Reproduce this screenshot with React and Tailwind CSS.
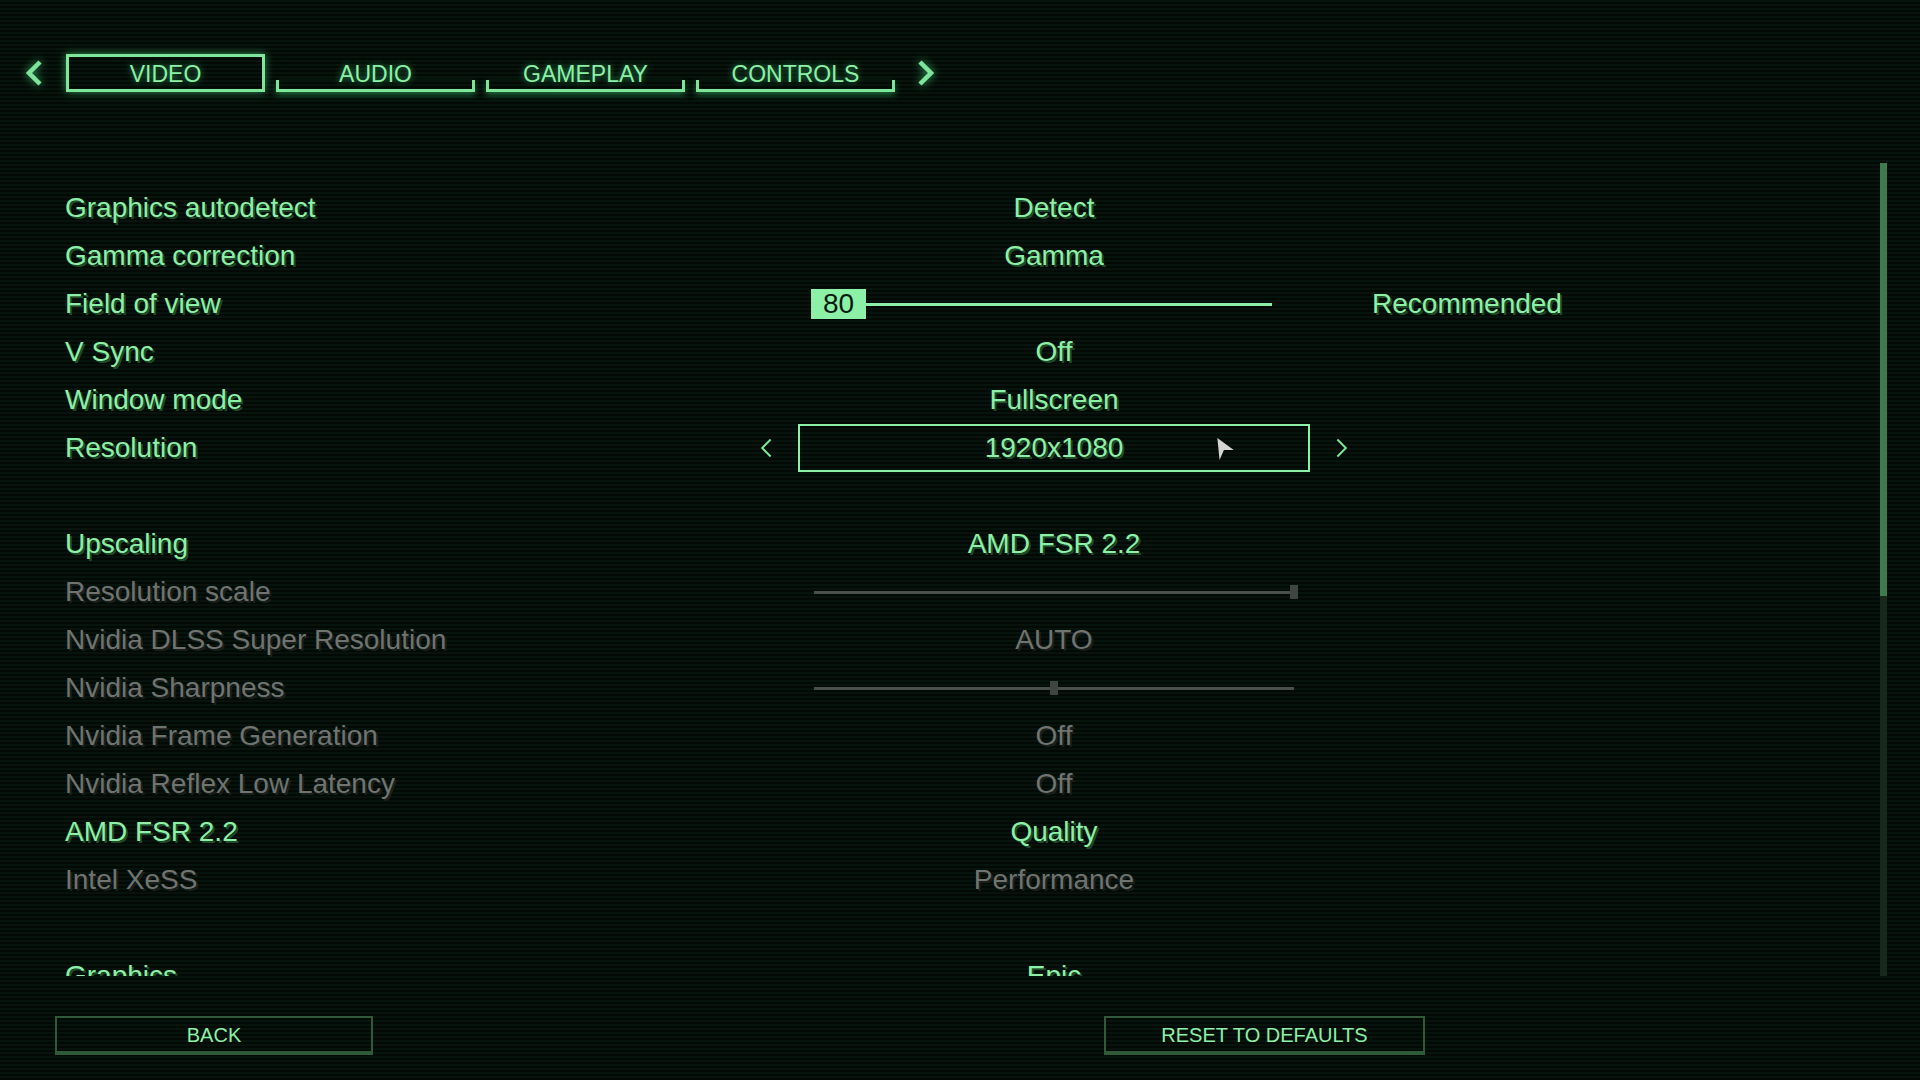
import React from 'react';

const green = 'text-[#8cf0a6] [text-shadow:2px_2px_0_#1f4a2b]';
const gray = 'text-[#6f7471] [text-shadow:2px_2px_0_#1a1f1c]';

const rows = [
    { label: 'Graphics autodetect', value: 'Detect' },
    { label: 'Gamma correction', value: 'Gamma' },
    { label: 'Field of view', type: 'fov', extra: 'Recommended' },
    { label: 'V Sync', value: 'Off' },
    { label: 'Window mode', value: 'Fullscreen' },
    { label: 'Resolution', type: 'select', value: '1920x1080' },
    { spacer: true },
    { label: 'Upscaling', value: 'AMD FSR 2.2' },
    { label: 'Resolution scale', type: 'slider', pos: 100, off: true },
    { label: 'Nvidia DLSS Super Resolution', value: 'AUTO', off: true },
    { label: 'Nvidia Sharpness', type: 'slider', pos: 50, off: true },
    { label: 'Nvidia Frame Generation', value: 'Off', off: true },
    { label: 'Nvidia Reflex Low Latency', value: 'Off', off: true },
    { label: 'AMD FSR 2.2', value: 'Quality' },
    { label: 'Intel XeSS', value: 'Performance', off: true },
    { spacer: true },
    { label: 'Graphics', value: 'Epic' },
];

const Chevron = ({ dir = 'left', thick = false }) => (
    <svg
        width={thick ? 18 : 14}
        height={thick ? 28 : 20}
        viewBox="0 0 18 26"
        className={thick ? 'drop-shadow-[0_0_4px_#3fae66]' : ''}
    >
        <path
            d={dir === 'left' ? 'M15 2 L4 13 L15 24' : 'M3 2 L14 13 L3 24'}
            fill="none"
            stroke="#7ee69a"
            strokeWidth={thick ? 4.5 : 2.5}
            strokeLinejoin="miter"
        />
    </svg>
);

const Tab = ({ label, active }) => (
    <div className="relative h-[38px] w-[199px] flex items-center justify-center">
        {active ? (
            <div className="absolute inset-0 border-[3px] border-[#7ee69a] shadow-[0_0_8px_#2f8a50]" />
        ) : (
            <div className="absolute inset-x-0 bottom-0 h-[12px] border-x-[3px] border-b-[3px] border-[#7ee69a] shadow-[0_3px_6px_#1f6a3a]" />
        )}
        <span className="relative mt-[3px] text-[23px] text-[#8cf0a6] [text-shadow:0_0_6px_#2f9a58]">{label}</span>
    </div>
);

const GraySlider = ({ pos }) => (
    <div className="relative w-[480px] h-[14px] flex items-center">
        <div className="w-full h-[3px] bg-[#4a504c]" />
        <div
            className="absolute top-0 h-[14px] w-[8px] bg-[#3f4541]"
            style={{ left: `calc(${pos}% - 4px)` }}
        />
    </div>
);

const Value = ({ row }) => {
    if (row.type === 'fov') {
        return (
            <div className="flex items-center pl-[61px]">
                <div className="w-[55px] h-[30px] bg-[#8cf0a6] flex items-center justify-center text-[28px] text-[#0a1a10]">
                    80
                </div>
                <div className="w-[406px] h-[3px] bg-[#8cf0a6]" />
            </div>
        );
    }
    if (row.type === 'select') {
        return (
            <div className="flex items-center justify-center gap-[25px]">
                <Chevron dir="left" />
                <div className="relative w-[512px] h-[48px] border-2 border-[#8cf0a6] flex items-center justify-center">
                    <span className={`text-[28px] ${green}`}>{row.value}</span>
                    <svg width="22" height="24" viewBox="0 0 20 22" className="absolute left-[414px] top-[11px]">
                        <path d="M3 1 L18 12 L9 12 L5 21 Z" fill="#d4d6d4" />
                    </svg>
                </div>
                <Chevron dir="right" />
            </div>
        );
    }
    if (row.type === 'slider') {
        return (
            <div className="flex justify-center">
                <GraySlider pos={row.pos} />
            </div>
        );
    }
    return <div className={`text-center text-[28px] ${row.off ? gray : green}`}>{row.value}</div>;
};

const App = () => {
    return (
        <div className="w-[1920px] h-[1080px] overflow-hidden flex flex-col font-['Liberation_Sans',sans-serif] bg-[#050e09] bg-[repeating-linear-gradient(to_bottom,#07140d_0px,#07140d_2px,#030a06_2px,#030a06_4px)]">
            {/* tabs */}
            <div className="flex items-center h-[38px] mt-[54px] pl-[25px]">
                <Chevron dir="left" thick />
                <div className="flex gap-[11px] ml-[23px]">
                    <Tab label="VIDEO" active />
                    <Tab label="AUDIO" />
                    <Tab label="GAMEPLAY" />
                    <Tab label="CONTROLS" />
                </div>
                <div className="ml-[22px]">
                    <Chevron dir="right" thick />
                </div>
            </div>

            {/* settings list */}
            <div className="flex mt-[71px] h-[813px]">
                <div className="flex-1 overflow-hidden pt-[21px] pl-[65px]">
                    {rows.map((row, i) =>
                        row.spacer ? (
                            <div key={i} className="h-[48px]" />
                        ) : (
                            <div key={i} className="grid grid-cols-[685px_608px_218px] h-[48px] items-center">
                                <div className={`text-[28px] ${row.off ? gray : green}`}>{row.label}</div>
                                <Value row={row} />
                                <div className={`text-center text-[28px] ${green}`}>{row.extra}</div>
                            </div>
                        )
                    )}
                </div>
                <div className="w-[7px] mr-[33px] bg-[#17291d] flex flex-col">
                    <div className="h-[433px] bg-[#3d7a4f]" />
                </div>
            </div>

            {/* footer */}
            <div className="flex mt-[40px]">
                <button className="ml-[55px] w-[318px] h-[39px] border-2 border-b-4 border-[#2e5a3a] text-[20px] text-[#8cf0a6]">
                    BACK
                </button>
                <button className="ml-[731px] w-[321px] h-[39px] border-2 border-b-4 border-[#2e5a3a] text-[20px] text-[#8cf0a6]">
                    RESET TO DEFAULTS
                </button>
            </div>
        </div>
    );
};

export default App;
